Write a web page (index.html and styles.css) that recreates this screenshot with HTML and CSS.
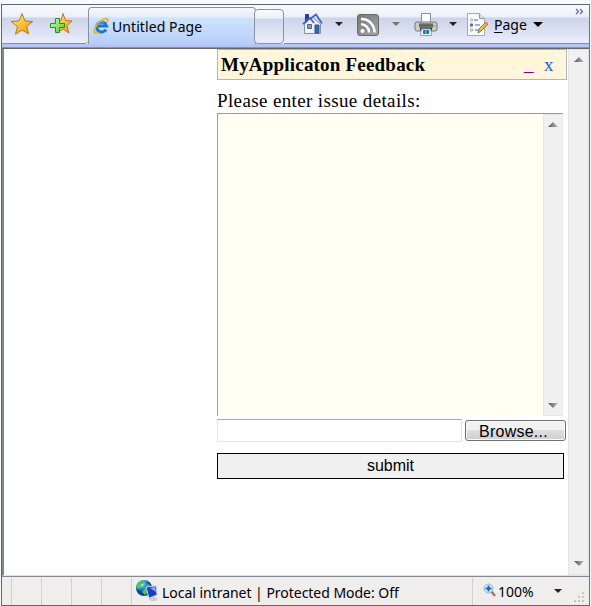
FILE: index.html
```html
<!DOCTYPE html>
<html lang="en">
<head>
<meta charset="utf-8">
<title>Untitled Page</title>
<link rel="stylesheet" href="styles.css">
</head>
<body>
<svg width="0" height="0" class="defs">
  <defs>
    <linearGradient id="gold" x2="1" y2="1"><stop stop-color="#fff0a0"/><stop offset=".5" stop-color="#fbc13c"/><stop offset="1" stop-color="#ef9100"/></linearGradient>
    <linearGradient id="green" x2="1" y2="1"><stop stop-color="#c8ffb0"/><stop offset="1" stop-color="#3fd52e"/></linearGradient>
    <linearGradient id="grey" x2="1" y2="1"><stop stop-color="#777"/><stop offset="1" stop-color="#a5a5a5"/></linearGradient>
    <linearGradient id="metal" x2="0" y2="1"><stop stop-color="#aaa"/><stop offset=".5" stop-color="#555"/><stop offset="1" stop-color="#999"/></linearGradient>
    <linearGradient id="arrow" x2="1" y2="0"><stop stop-color="#555"/><stop offset="1" stop-color="#bbb"/></linearGradient>
    <radialGradient id="globe" cx=".35" cy=".25"><stop stop-color="#dff"/><stop offset=".45" stop-color="#3d9ee5"/><stop offset="1" stop-color="#0b4298"/></radialGradient>
  </defs>
</svg>
<div class="window">
  <header class="toolbar">
    <div class="favorites">
      <svg width="24" height="24" viewBox="0 0 24 24"><path d="M12 1.500 15 9l7.700.5-6 5 2 7.500L12 18l-6.500 4.200 2-7.700-6.200-5L9 9z" fill="url(#gold)" stroke="#af7c28" stroke-linejoin="round"/></svg>
      <svg width="24" height="24" viewBox="0 0 24 24"><path d="m14 1.500 2.500 7 6.500.5-5 4.500 2 7.500-6-4-6 4 2-7.500-4-4 6-1z" fill="url(#gold)" stroke="#af7c28" stroke-linejoin="round"/><path d="M6.500 6.500h4v5h5v4h-5v5h-4v-5h-5v-4h5z" fill="url(#green)" stroke="#239126"/></svg>
    </div>
    <div class="tab">
      <svg width="16" height="18" viewBox="0 0 16 18"><path d="M13 12.500A5 5 0 1 1 13.500 9H4" fill="none" stroke="#1678cf" stroke-width="3"/><path d="M4 7.500C5 4 9 3.500 11 6" fill="none" stroke="#68c8f5"/><path d="M2 16C-1 12 8 2 13 1.500c3 0 1.500 3 .5 4M2 16c1.500.7 3-.2 4-1" fill="none" stroke="#e9ab27" stroke-width="1.600"/></svg>
      <span class="tab-title">Untitled Page</span>
    </div>
    <div class="new-tab"></div>
    <div class="commands">
      <svg class="home" width="21" height="22" viewBox="0 0 21 22"><path d="M3.500 1.500h3V6l-3 3z" fill="#263ebc" stroke="#263591"/><path d="M2.500 11 10 4l8.500 7v9.500h-16z" fill="#f0f2f4" stroke="#8391a6"/><path d="M8 6 14 1.500l6 9M1 11l7-6 4 5" fill="none" stroke="#435fcb" stroke-width="1.700"/><path d="M13 12h4v8h-4z" fill="#2670ae" stroke="#315583"/><path d="M5.500 11.500h4v4h-4z" fill="#78a1b9" stroke="#536778"/></svg>
      <i class="caret home-caret"></i>
      <svg class="feed" width="22" height="22" viewBox="0 0 22 22"><rect x=".5" y=".5" width="21" height="21" rx="2.500" fill="url(#grey)" stroke="#696969"/><circle cx="5.500" cy="17" r="2" fill="#fff"/><path d="M4 10.200A8 8 0 0 1 12 18.500M4 5A13 13 0 0 1 17.500 18.500" fill="none" stroke="#fff" stroke-width="2.400"/></svg>
      <i class="caret feed-caret"></i>
      <svg class="printer" width="24" height="24" viewBox="0 0 24 24"><path d="M7.500.5h9v10h-9z" fill="#fff" stroke="#8991a0"/><rect x="1" y="9" width="22" height="9" rx="2" fill="#ccc" stroke="#777"/><path d="M5 9.500h14V15H5z" fill="url(#metal)"/><path d="M6 14.500h12v3H6z" fill="#444"/><path d="m7.500 16-1 6.500h11l-1-6.500z" fill="#fff" stroke="#999"/><path d="M9 17h2v4H9z" fill="#137dab"/><path d="M11 17h2v4h-2z" fill="#19bdc1"/><path d="M13 17h2v4h-2z" fill="#276abd"/><path d="M19 12h3v2h-3z" fill="#74e45d"/></svg>
      <i class="caret print-caret"></i>
      <svg class="page-icon" width="24" height="24" viewBox="0 0 24 24"><path d="M1.500.5h12l5 5v17h-17z" fill="#f8f9fa" stroke="#a5a9ae"/><path d="M13.500.5v5h5" fill="#ddd" stroke="#999"/><path d="M8 7h4M9 12h5M9 17h3" stroke="#8994b8" stroke-width="1.500"/><circle cx="5.500" cy="7" r="1.200" fill="none" stroke="#aaa"/><circle cx="5.500" cy="12" r="1.700" fill="#666996"/><circle cx="5.500" cy="17" r="1.200" fill="none" stroke="#999"/><path d="m12 20 1-4 7-7 2 2-7 7z" fill="#f0c13a" stroke="#83713b"/><path d="m19 10 1.500-1.500L22 10l-1 2z" fill="#d68a82"/></svg>
      <span class="page-label"><u>P</u>age</span>
      <i class="caret page-caret"></i>
      <svg class="more" width="9" height="7" viewBox="0 0 9 7"><path d="m1 1 2.500 2.500L1 6M5 1l2.500 2.500L5 6" fill="none" stroke="#6968a5" stroke-width="1.300"/></svg>
    </div>
  </header>
  <div class="tab-base"></div>
  <main class="viewport">
    <section class="feedback">
      <div class="panel-title"><b>MyApplicaton Feedback</b><span class="minimize">_</span><span class="close">x</span></div>
      <label class="prompt">Please enter issue details:</label>
      <div class="details">
        <div class="details-scroll">
          <svg width="10" height="5" viewBox="0 0 10 5"><path d="M0 5 5 0l5 5z" fill="url(#arrow)"/></svg>
          <svg width="10" height="5" viewBox="0 0 10 5"><path d="M0 0h10L5 5z" fill="url(#arrow)"/></svg>
        </div>
      </div>
      <div class="file-row"><div class="file-field"></div><div class="browse"><span>Browse...</span></div></div>
      <div class="submit"><span>submit</span></div>
    </section>
    <div class="page-scroll">
      <svg width="10" height="5" viewBox="0 0 10 5"><path d="M0 5 5 0l5 5z" fill="url(#arrow)"/></svg>
      <svg width="10" height="5" viewBox="0 0 10 5"><path d="M0 0h10L5 5z" fill="url(#arrow)"/></svg>
    </div>
  </main>
  <footer class="status">
    <div class="cell first"></div><div class="cell"></div><div class="cell"></div><div class="cell"></div><div class="cell"></div>
    <div class="zone">
      <svg width="23" height="23" viewBox="0 0 23 23"><circle cx="9" cy="9" r="8" fill="url(#globe)"/><path d="M2 5c3-4 6-4 8-3L8 5 5 6l1 3-3 1-2-2zM10 9l3-4 3 2-2 5-4 4-3-3z" fill="#4bc650"/><path d="m11 8 10-1 1 9-8 3z" fill="#173fc1" stroke="#bacbe2"/><path d="m15 9 5-1 1 5z" fill="#91a8f4"/><ellipse cx="18" cy="20" rx="4" ry="2" fill="#c6cbd0"/></svg>
      <span class="zone-text">Local intranet | Protected Mode: Off</span>
    </div>
    <div class="zoom">
      <svg width="13" height="14" viewBox="0 0 13 14"><path d="m8 8 4 5" stroke="#a27b52" stroke-width="2.500"/><circle cx="5.500" cy="5.500" r="4.500" fill="#dcf4ff" stroke="#8eafcb"/><path d="M5.500 2.500v6M2.500 5.500h6" stroke="#1268be" stroke-width="2"/></svg>
      <span class="zoom-text">100%</span><i class="caret"></i>
      <svg class="grip" width="12" height="12" viewBox="0 0 12 12"><path d="M8 0h2v2H8zM4 4h2v2H4zM8 4h2v2H8zM0 8h2v2H0zM4 8h2v2H4zM8 8h2v2H8z" fill="#c9c5c5"/></svg>
    </div>
  </footer>
</div>
</body>
</html>
```

FILE: styles.css
```css
* { box-sizing: border-box; }
body { margin: 0; height: 606px; padding: 4px 0 0 1px; overflow: hidden; background: #f8fafc; font-family: "Noto Sans", sans-serif; color: #000; }
.defs { display: block; height: 0; }
svg { flex: none; display: block; }
span, b { white-space: nowrap; }
.window { width: 589px; height: 602px; border: 1px solid #59677e; border-right-color: #65748d; display: flex; flex-direction: column; background: #fff; }
.toolbar { height: 39px; display: flex; background: linear-gradient(#fafbff 0, #eceff9 12px, #cdd4e8 13px, #dde2f4 28px, #edf0ff 100%); }
.favorites { width: 86px; border-bottom: 1px solid #898e9b; border-radius: 0 0 4px 0; padding: 7px 0 0 8px; display: flex; gap: 15px; }
.tab { width: 168px; height: 40px; margin-top: 2px; border: 1px solid #8b91a0; border-bottom: 0; border-radius: 4px 4px 0 0; background: linear-gradient(#f6f8ff 0, #e5edfb 9px, #cce4fa 10px, #b6cbfb 100%); display: flex; padding: 9px 0 0 4px; gap: 3px; }
.tab-title { font-size: 14px; line-height: 20px; letter-spacing: .08px; }
.new-tab { width: 30px; height: 35px; margin: 4px 0 0 -2px; border: 1px solid #8b91a0; border-radius: 4px; background: linear-gradient(#fafbff 0, #eceff9 8px, #ced5e8 9px, #ebeefe 100%); }
.commands { flex: 1; border-bottom: 1px solid #898e9b; display: flex; align-items: flex-start; }
.caret { display: block; width: 0; height: 0; border: 4px solid transparent; border-top-color: #222; border-bottom: 0; flex: none; }
.home { margin: 8px 0 0 18px; }
.home-caret { margin: 17px 0 0 12px; }
.feed { margin: 9px 0 0 14px; }
.feed-caret { margin: 17px 0 0 13px; border-top-color: #71747e; }
.printer { margin: 8px 0 0 14px; }
.print-caret { margin: 17px 0 0 11px; }
.page-icon { margin: 8px 0 0 9px; }
.page-label { margin: 10px 0 0 4px; width: 33px; font-size: 14px; line-height: 20px; }
.page-label u { text-decoration-thickness: 1px; text-underline-offset: 2px; }
.page-caret { margin: 17px 0 0 6px; border-width: 5px 5px 0; border-top-color: #000; }
.more { margin: 3px 0 0 32px; }
.tab-base { height: 5px; background: linear-gradient(#b6c5f8 0 3px, #8d929d 3px 4px, #66666b 4px); }
.viewport { height: 527px; display: flex; justify-content: flex-end; border-left: 2px solid #83878b; border-bottom: 1px solid #e2e3e6; }
.feedback { width: 350px; margin-right: 1px; }
.panel-title { height: 31px; border: 1px solid #b5b5b2; background: #fff6dc; font: 19px/30px "Liberation Serif", serif; display: flex; padding-left: 3px; }
.panel-title b { width: 303px; font-size: 19px; letter-spacing: .2px; }
.minimize { width: 20px; color: #800080; }
.close { color: #1765ce; }
.prompt { display: block; height: 33px; font: 19px/42px "Liberation Serif", serif; letter-spacing: .37px; white-space: nowrap; }
.details { width: 346px; height: 303px; border-top: 1px solid #9a9a9a; border-left: 1px solid #9a9a9a; background: #fffff2; display: flex; justify-content: flex-end; }
.details-scroll { width: 20px; background: #f0f0f0; border: 1px solid #e7e7e7; display: flex; flex-direction: column; align-items: center; justify-content: space-between; padding: 7px 0; }
.file-row { display: flex; gap: 3px; padding-top: 3px; }
.file-field { width: 245px; height: 23px; border: 1px solid #e1e3e8; border-top-color: #a9abad; }
.browse { width: 101px; height: 21px; margin-top: 1px; border: 1px solid #707070; border-radius: 3px; background: linear-gradient(#f2f2f2 48%, #dedede 50%, #cfcfcf); box-shadow: inset 0 0 0 1px #fafafa; font: 16px/22px "Liberation Sans", sans-serif; padding-left: 13px; }
.browse span { letter-spacing: .25px; }
.submit { width: 347px; height: 26px; margin-top: 11px; border: 1px solid #000; background: #f0f0f0; font: 16px/24px "Liberation Sans", sans-serif; text-align: center; }
.page-scroll { width: 21px; background: #f0f0f0; border: 1px solid #e5e5e5; display: flex; flex-direction: column; align-items: center; justify-content: space-between; padding: 7px 0 8px; }
.status { flex: 1; border-top: 1px solid #858990; background: #f0eded; display: flex; padding-top: 1px; }
.cell { width: 30px; border-right: 1px solid #d3d0d0; }
.cell.first { width: 10px; }
.zone { width: 341px; border-right: 1px solid #d3d0d0; display: flex; padding: 1px 0 0 3px; }
.zone-text { margin: 4px 0 0 4px; font-size: 14px; line-height: 20px; letter-spacing: -.03px; }
.zoom { flex: 1; display: flex; padding: 5px 0 0 10px; }
.zoom-text { width: 58px; font-size: 14px; line-height: 18px; padding-left: 2px; }
.zoom .caret { margin: 6px 0 0 0; }
.grip { margin: 9px 0 0 12px; }
```
